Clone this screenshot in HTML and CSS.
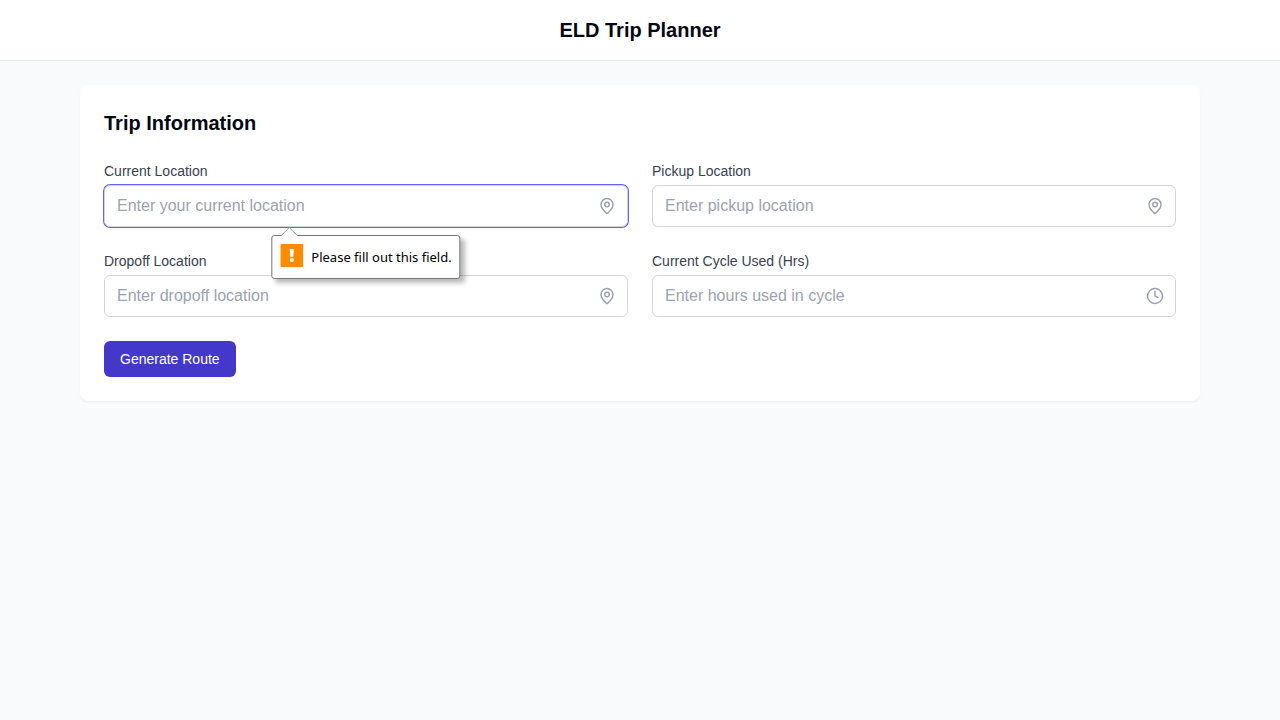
FILE: index.html
```html
<!DOCTYPE html>
<html lang="en">
<head>
  <meta charset="utf-8">
  <meta name="viewport" content="width=device-width, initial-scale=1">
  <title>ELD Trip Planner</title>
  <link rel="stylesheet" href="styles.css">
</head>
<body>
  <header class="site-header">
    <h1 class="site-title">ELD Trip Planner</h1>
  </header>

  <main class="page">
    <section class="card">
      <h2 class="card-title">Trip Information</h2>
      <form class="trip-form" novalidate>
        <div class="fields">
          <div class="field">
            <label class="label" for="current">Current Location</label>
            <div class="control">
              <input class="input input-active" id="current" type="text" placeholder="Enter your current location" aria-describedby="current-error" required>
              <svg class="icon" viewBox="0 0 24 24" aria-hidden="true"><path d="M20 10c0 4.993-5.539 10.193-7.399 11.799a1 1 0 0 1-1.202 0C9.539 20.193 4 14.993 4 10a8 8 0 0 1 16 0"/><circle cx="12" cy="10" r="3"/></svg>
              <div class="bubble" id="current-error" role="alert">
                <svg class="bubble-arrow" viewBox="0 0 18 9" aria-hidden="true"><path class="arrow-fill" d="M1 9 9 1l8 8z"/><path class="arrow-line" d="M1 8.500 9 .5l8 8"/></svg>
                <svg class="bubble-icon" viewBox="0 0 23 23" aria-hidden="true"><rect width="23" height="23" rx="1" fill="#ff8c00"/><path d="M9.500 5h4l-.5 8h-3z" fill="#fff"/><circle cx="11.500" cy="16" r="2" fill="#fff"/></svg>
                <span>Please fill out this field.</span>
              </div>
            </div>
          </div>

          <div class="field">
            <label class="label" for="pickup">Pickup Location</label>
            <div class="control">
              <input class="input" id="pickup" type="text" placeholder="Enter pickup location" required>
              <svg class="icon" viewBox="0 0 24 24" aria-hidden="true"><path d="M20 10c0 4.993-5.539 10.193-7.399 11.799a1 1 0 0 1-1.202 0C9.539 20.193 4 14.993 4 10a8 8 0 0 1 16 0"/><circle cx="12" cy="10" r="3"/></svg>
            </div>
          </div>

          <div class="field">
            <label class="label" for="dropoff">Dropoff Location</label>
            <div class="control">
              <input class="input" id="dropoff" type="text" placeholder="Enter dropoff location" required>
              <svg class="icon" viewBox="0 0 24 24" aria-hidden="true"><path d="M20 10c0 4.993-5.539 10.193-7.399 11.799a1 1 0 0 1-1.202 0C9.539 20.193 4 14.993 4 10a8 8 0 0 1 16 0"/><circle cx="12" cy="10" r="3"/></svg>
            </div>
          </div>

          <div class="field">
            <label class="label" for="cycle">Current Cycle Used (Hrs)</label>
            <div class="control">
              <input class="input" id="cycle" type="text" inputmode="decimal" placeholder="Enter hours used in cycle" required>
              <svg class="icon" viewBox="0 0 24 24" aria-hidden="true"><circle cx="12" cy="12" r="10"/><path d="M12 6v6l4 2"/></svg>
            </div>
          </div>
        </div>

        <button class="submit" type="submit">Generate Route</button>
      </form>
    </section>
  </main>
</body>
</html>
```

FILE: styles.css
```css
*,
*::before,
*::after {
  box-sizing: border-box;
}

body {
  margin: 0;
  min-height: 100vh;
  background: #f9fafb;
  color: #030712;
  font-family: "Liberation Sans", Arial, sans-serif;
  font-size: 16px;
  line-height: 24px;
}

.site-header {
  padding: 16px 24px;
  border-bottom: 1px solid #e5e7eb;
  background: #fff;
  text-align: center;
}

.site-title,
.card-title {
  margin: 0;
  font-size: 20px;
  line-height: 28px;
  font-weight: 700;
}

.page {
  max-width: 1168px;
  margin: 0 auto;
  padding: 24px;
}

.card {
  padding: 24px;
  border-radius: 8px;
  background: #fff;
  box-shadow: 0 1px 2px rgba(0, 0, 0, 0.05);
}

.trip-form {
  display: flex;
  flex-direction: column;
  align-items: flex-start;
  gap: 24px;
  margin-top: 24px;
}

.fields {
  display: grid;
  grid-template-columns: 1fr;
  gap: 24px;
  width: 100%;
}

@media (min-width: 768px) {
  .fields {
    grid-template-columns: repeat(2, 1fr);
  }
}

.field {
  display: flex;
  flex-direction: column;
  gap: 4px;
}

.label {
  color: #374151;
  font-size: 14px;
  line-height: 20px;
}

.control {
  position: relative;
}

.input {
  display: block;
  width: 100%;
  padding: 8px 40px 8px 12px;
  border: 1px solid #d1d5db;
  border-radius: 6px;
  background: #fff;
  color: #030712;
  font: inherit;
  outline: none;
}

.input::placeholder {
  color: #9ca3af;
  opacity: 1;
}

.input:focus,
.input-active {
  box-shadow: 0 0 0 1px #6366f1;
}

.icon {
  position: absolute;
  top: 12px;
  right: 12px;
  width: 18px;
  height: 18px;
  fill: none;
  stroke: #9ca3af;
  stroke-width: 2;
  stroke-linecap: round;
  stroke-linejoin: round;
  pointer-events: none;
}

/* Validation message shown below a required field */
.bubble {
  position: absolute;
  z-index: 1;
  top: calc(100% + 8px);
  left: 50%;
  display: flex;
  align-items: flex-start;
  gap: 8px;
  padding: 8px;
  border: 1px solid #767676;
  border-radius: 3px;
  background: #fff;
  box-shadow: 4px 4px 5px rgba(0, 0, 0, 0.28);
  color: #000;
  font-family: "Segoe UI", "Noto Sans", "Open Sans", sans-serif;
  font-size: 13px;
  line-height: 26px;
  white-space: nowrap;
  transform: translateX(-50%);
}

.bubble-arrow {
  position: absolute;
  top: -9px;
  left: 8px;
  width: 18px;
  height: 9px;
}

.arrow-fill {
  fill: #fff;
}

.arrow-line {
  fill: none;
  stroke: #a3a3a3;
}

.bubble-icon {
  width: 23px;
  height: 23px;
}

.submit {
  padding: 8px 16px;
  border: 0;
  border-radius: 6px;
  background: #4338ca;
  color: #fff;
  font-family: inherit;
  font-size: 14px;
  line-height: 20px;
}
```
